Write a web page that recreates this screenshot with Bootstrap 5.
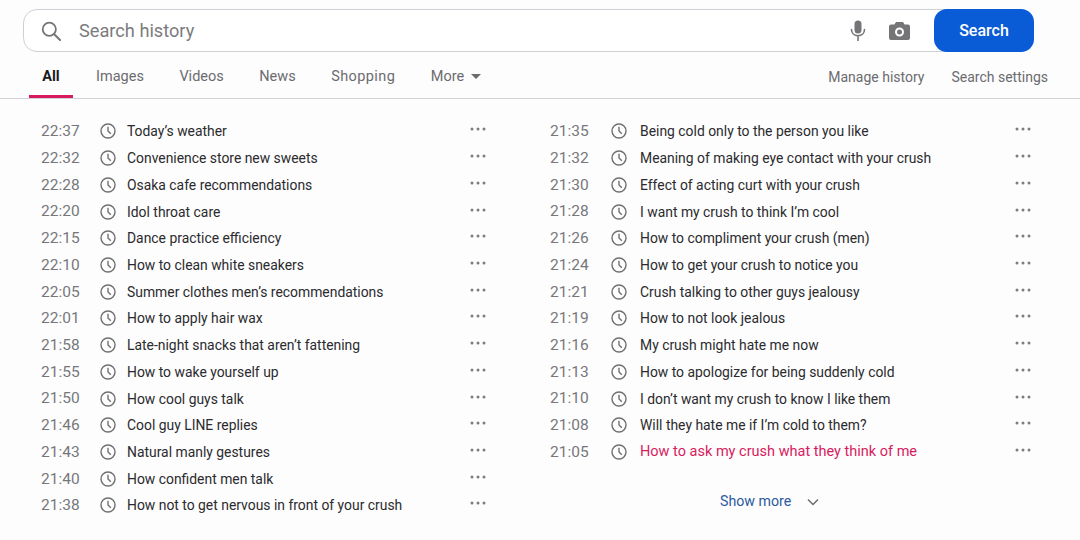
<!DOCTYPE html>
<html lang="en">
<head>
    <meta charset="UTF-8">
    <meta name="viewport" content="width=device-width, initial-scale=1.0">
    <title>Search history</title>
    <link href="https://cdn.jsdelivr.net/npm/bootstrap@5.3.2/dist/css/bootstrap.min.css" rel="stylesheet">
    <style>
        html, body {
            height: 100%;
            overflow: hidden;
        }
        body {
            background: #fdfdfe;
            font-family: Roboto, "Liberation Sans", sans-serif;
            font-size: 13.900px;
            color: #2b2b2d;
        }
        .top-area {
            padding: 9px 46px 0 23px;
        }
        .search-box {
            height: 43px;
            border: 1px solid #ced0d6;
            border-radius: 14px;
            background: #fff;
            padding-left: 17px;
        }
        .search-placeholder {
            margin-left: 18px;
            font-size: 18.200px;
            color: #7b7b7e;
        }
        .search-tools {
            gap: 23px;
            margin-right: 24px;
        }
        .search-btn {
            width: 100px;
            height: 43px;
            margin: -1px -1px -1px 0;
            border: 0;
            border-radius: 13px;
            background: #0a5cd6;
            color: #fff;
            font-size: 16px;
            font-weight: 500;
        }
        .tabs-bar {
            height: 47px;
            padding: 0 32px 0 29px;
            border-bottom: 1px solid #d2d3d9;
        }
        .tab-link {
            display: block;
            height: 46px;
            padding-top: 14px;
            margin-right: 35.500px;
            font-size: 14.500px;
            color: #6b6b6e;
            text-decoration: none;
        }
        .tab-link.is-active {
            width: 44px;
            margin-right: 23px;
            text-align: center;
            font-weight: 700;
            color: #1b1b1d;
            border-bottom: 3px solid #d81b60;
        }
        .tab-wide {
            letter-spacing: .4px;
        }
        .more-caret {
            display: inline-block;
            margin-left: 7px;
            vertical-align: 2px;
            border-left: 5px solid transparent;
            border-right: 5px solid transparent;
            border-top: 5px solid #6b6b6e;
        }
        .side-links {
            padding-top: 15px;
        }
        .side-link {
            margin-left: 27px;
            font-size: 14px;
            color: #6b6b6e;
        }
        .history-area {
            padding-top: 19px;
        }
        .history-col-left {
            width: 507px;
            padding-left: 41px;
        }
        .history-col-right {
            width: 573px;
            padding-left: 43px;
        }
        .history-row {
            height: 26.720px;
        }
        .row-time {
            width: 50px;
            padding-top: 1px;
            font-size: 15.500px;
            color: #77777a;
        }
        .history-col-right .row-time {
            width: 59px;
        }
        .row-clock {
            flex: none;
            width: 16px;
            height: 16px;
            margin: 0 11px 0 9px;
        }
        .history-col-right .row-clock {
            margin: 0 13px 0 2px;
        }
        .row-text {
            flex: 1;
            padding-top: 1px;
            white-space: nowrap;
        }
        .row-dots {
            flex: none;
            width: 16px;
            height: 4px;
            margin: 0 0 4px 0;
        }
        .history-col-left .row-dots {
            margin-right: 21px;
        }
        .history-col-right .row-dots {
            margin-right: 49px;
        }
        .row-pink {
            padding-top: 0;
            font-size: 14.500px;
            color: #d81b60;
        }
        .show-more {
            margin-top: 26px;
            padding-left: 170px;
            color: #2a5a9f;
            font-size: 14.200px;
        }
        .show-more svg {
            margin-left: 16px;
        }
    </style>
</head>
<body>
    <svg class="d-none">
        <symbol id="clock" viewBox="0 0 16 16">
            <circle cx="8" cy="8" r="7" fill="none" stroke="#6f6f72" stroke-width="1.400"/>
            <path d="M8 3.800V8l2.800 2.800" fill="none" stroke="#6f6f72" stroke-width="1.400"/>
        </symbol>
        <symbol id="dots" viewBox="0 0 16 4">
            <circle cx="2" cy="2" r="1.500" fill="#7d7d80"/>
            <circle cx="8" cy="2" r="1.500" fill="#7d7d80"/>
            <circle cx="14" cy="2" r="1.500" fill="#7d7d80"/>
        </symbol>
    </svg>

    <div class="top-area">
        <div class="search-box d-flex align-items-center">
            <svg width="20" height="20" viewBox="0 0 20 20">
                <circle cx="8.300" cy="8.300" r="6.600" fill="none" stroke="#757578" stroke-width="1.800"/>
                <path d="M13 13l6 6" stroke="#757578" stroke-width="2" stroke-linecap="round"/>
            </svg>
            <span class="search-placeholder flex-grow-1">Search history</span>
            <div class="search-tools d-flex align-items-center">
                <svg width="16" height="21" viewBox="0 0 16 21">
                    <rect x="4.500" y="0.500" width="7" height="13" rx="3.500" fill="#757578"/>
                    <path d="M1.500 9.500c0 3.800 2.800 6.200 6.500 6.200s6.500-2.400 6.500-6.200M8 15.500v5" fill="none" stroke="#757578" stroke-width="1.600" stroke-linecap="round"/>
                </svg>
                <svg width="21" height="19" viewBox="0 0 21 19">
                    <path fill="#757578" fill-rule="evenodd" d="M7 1h7l1.600 2.500h3.400a2 2 0 0 1 2 2V17a2 2 0 0 1-2 2H2a2 2 0 0 1-2-2V5.500a2 2 0 0 1 2-2h3.400zM10.500 6.500a4.500 4.500 0 1 0 0 9 4.500 4.500 0 0 0 0-9zm0 2a2.500 2.500 0 1 1 0 5 2.500 2.500 0 0 1 0-5z"/>
                </svg>
            </div>
            <button type="button" class="search-btn btn">Search</button>
        </div>
    </div>

    <div class="tabs-bar d-flex align-items-start">
        <a class="tab-link is-active" href="#">All</a>
        <a class="tab-link" href="#">Images</a>
        <a class="tab-link" href="#">Videos</a>
        <a class="tab-link" href="#">News</a>
        <a class="tab-link tab-wide" href="#">Shopping</a>
        <a class="tab-link" href="#">More<span class="more-caret"></span></a>
        <div class="side-links ms-auto d-flex">
            <span class="side-link">Manage history</span>
            <span class="side-link">Search settings</span>
        </div>
    </div>

    <div class="history-area d-flex">
        <div class="history-col-left">
            <div class="history-row d-flex align-items-center"><span class="row-time">22:37</span><svg class="row-clock"><use href="#clock"/></svg><span class="row-text">Today’s weather</span><svg class="row-dots"><use href="#dots"/></svg></div>
            <div class="history-row d-flex align-items-center"><span class="row-time">22:32</span><svg class="row-clock"><use href="#clock"/></svg><span class="row-text">Convenience store new sweets</span><svg class="row-dots"><use href="#dots"/></svg></div>
            <div class="history-row d-flex align-items-center"><span class="row-time">22:28</span><svg class="row-clock"><use href="#clock"/></svg><span class="row-text">Osaka cafe recommendations</span><svg class="row-dots"><use href="#dots"/></svg></div>
            <div class="history-row d-flex align-items-center"><span class="row-time">22:20</span><svg class="row-clock"><use href="#clock"/></svg><span class="row-text">Idol throat care</span><svg class="row-dots"><use href="#dots"/></svg></div>
            <div class="history-row d-flex align-items-center"><span class="row-time">22:15</span><svg class="row-clock"><use href="#clock"/></svg><span class="row-text">Dance practice efficiency</span><svg class="row-dots"><use href="#dots"/></svg></div>
            <div class="history-row d-flex align-items-center"><span class="row-time">22:10</span><svg class="row-clock"><use href="#clock"/></svg><span class="row-text">How to clean white sneakers</span><svg class="row-dots"><use href="#dots"/></svg></div>
            <div class="history-row d-flex align-items-center"><span class="row-time">22:05</span><svg class="row-clock"><use href="#clock"/></svg><span class="row-text">Summer clothes men’s recommendations</span><svg class="row-dots"><use href="#dots"/></svg></div>
            <div class="history-row d-flex align-items-center"><span class="row-time">22:01</span><svg class="row-clock"><use href="#clock"/></svg><span class="row-text">How to apply hair wax</span><svg class="row-dots"><use href="#dots"/></svg></div>
            <div class="history-row d-flex align-items-center"><span class="row-time">21:58</span><svg class="row-clock"><use href="#clock"/></svg><span class="row-text">Late-night snacks that aren’t fattening</span><svg class="row-dots"><use href="#dots"/></svg></div>
            <div class="history-row d-flex align-items-center"><span class="row-time">21:55</span><svg class="row-clock"><use href="#clock"/></svg><span class="row-text">How to wake yourself up</span><svg class="row-dots"><use href="#dots"/></svg></div>
            <div class="history-row d-flex align-items-center"><span class="row-time">21:50</span><svg class="row-clock"><use href="#clock"/></svg><span class="row-text">How cool guys talk</span><svg class="row-dots"><use href="#dots"/></svg></div>
            <div class="history-row d-flex align-items-center"><span class="row-time">21:46</span><svg class="row-clock"><use href="#clock"/></svg><span class="row-text">Cool guy LINE replies</span><svg class="row-dots"><use href="#dots"/></svg></div>
            <div class="history-row d-flex align-items-center"><span class="row-time">21:43</span><svg class="row-clock"><use href="#clock"/></svg><span class="row-text">Natural manly gestures</span><svg class="row-dots"><use href="#dots"/></svg></div>
            <div class="history-row d-flex align-items-center"><span class="row-time">21:40</span><svg class="row-clock"><use href="#clock"/></svg><span class="row-text">How confident men talk</span><svg class="row-dots"><use href="#dots"/></svg></div>
            <div class="history-row d-flex align-items-center"><span class="row-time">21:38</span><svg class="row-clock"><use href="#clock"/></svg><span class="row-text">How not to get nervous in front of your crush</span><svg class="row-dots"><use href="#dots"/></svg></div>
        </div>
        <div class="history-col-right">
            <div class="history-row d-flex align-items-center"><span class="row-time">21:35</span><svg class="row-clock"><use href="#clock"/></svg><span class="row-text">Being cold only to the person you like</span><svg class="row-dots"><use href="#dots"/></svg></div>
            <div class="history-row d-flex align-items-center"><span class="row-time">21:32</span><svg class="row-clock"><use href="#clock"/></svg><span class="row-text">Meaning of making eye contact with your crush</span><svg class="row-dots"><use href="#dots"/></svg></div>
            <div class="history-row d-flex align-items-center"><span class="row-time">21:30</span><svg class="row-clock"><use href="#clock"/></svg><span class="row-text">Effect of acting curt with your crush</span><svg class="row-dots"><use href="#dots"/></svg></div>
            <div class="history-row d-flex align-items-center"><span class="row-time">21:28</span><svg class="row-clock"><use href="#clock"/></svg><span class="row-text">I want my crush to think I’m cool</span><svg class="row-dots"><use href="#dots"/></svg></div>
            <div class="history-row d-flex align-items-center"><span class="row-time">21:26</span><svg class="row-clock"><use href="#clock"/></svg><span class="row-text">How to compliment your crush (men)</span><svg class="row-dots"><use href="#dots"/></svg></div>
            <div class="history-row d-flex align-items-center"><span class="row-time">21:24</span><svg class="row-clock"><use href="#clock"/></svg><span class="row-text">How to get your crush to notice you</span><svg class="row-dots"><use href="#dots"/></svg></div>
            <div class="history-row d-flex align-items-center"><span class="row-time">21:21</span><svg class="row-clock"><use href="#clock"/></svg><span class="row-text">Crush talking to other guys jealousy</span><svg class="row-dots"><use href="#dots"/></svg></div>
            <div class="history-row d-flex align-items-center"><span class="row-time">21:19</span><svg class="row-clock"><use href="#clock"/></svg><span class="row-text">How to not look jealous</span><svg class="row-dots"><use href="#dots"/></svg></div>
            <div class="history-row d-flex align-items-center"><span class="row-time">21:16</span><svg class="row-clock"><use href="#clock"/></svg><span class="row-text">My crush might hate me now</span><svg class="row-dots"><use href="#dots"/></svg></div>
            <div class="history-row d-flex align-items-center"><span class="row-time">21:13</span><svg class="row-clock"><use href="#clock"/></svg><span class="row-text">How to apologize for being suddenly cold</span><svg class="row-dots"><use href="#dots"/></svg></div>
            <div class="history-row d-flex align-items-center"><span class="row-time">21:10</span><svg class="row-clock"><use href="#clock"/></svg><span class="row-text">I don’t want my crush to know I like them</span><svg class="row-dots"><use href="#dots"/></svg></div>
            <div class="history-row d-flex align-items-center"><span class="row-time">21:08</span><svg class="row-clock"><use href="#clock"/></svg><span class="row-text">Will they hate me if I’m cold to them?</span><svg class="row-dots"><use href="#dots"/></svg></div>
            <div class="history-row d-flex align-items-center"><span class="row-time">21:05</span><svg class="row-clock"><use href="#clock"/></svg><span class="row-text row-pink">How to ask my crush what they think of me</span><svg class="row-dots"><use href="#dots"/></svg></div>
            <div class="show-more d-flex align-items-center">
                <span>Show more</span>
                <svg width="12" height="8" viewBox="0 0 12 8"><path d="M1 1.500l5 5 5-5" fill="none" stroke="#6b6b6e" stroke-width="1.500"/></svg>
            </div>
        </div>
    </div>
</body>
</html>
